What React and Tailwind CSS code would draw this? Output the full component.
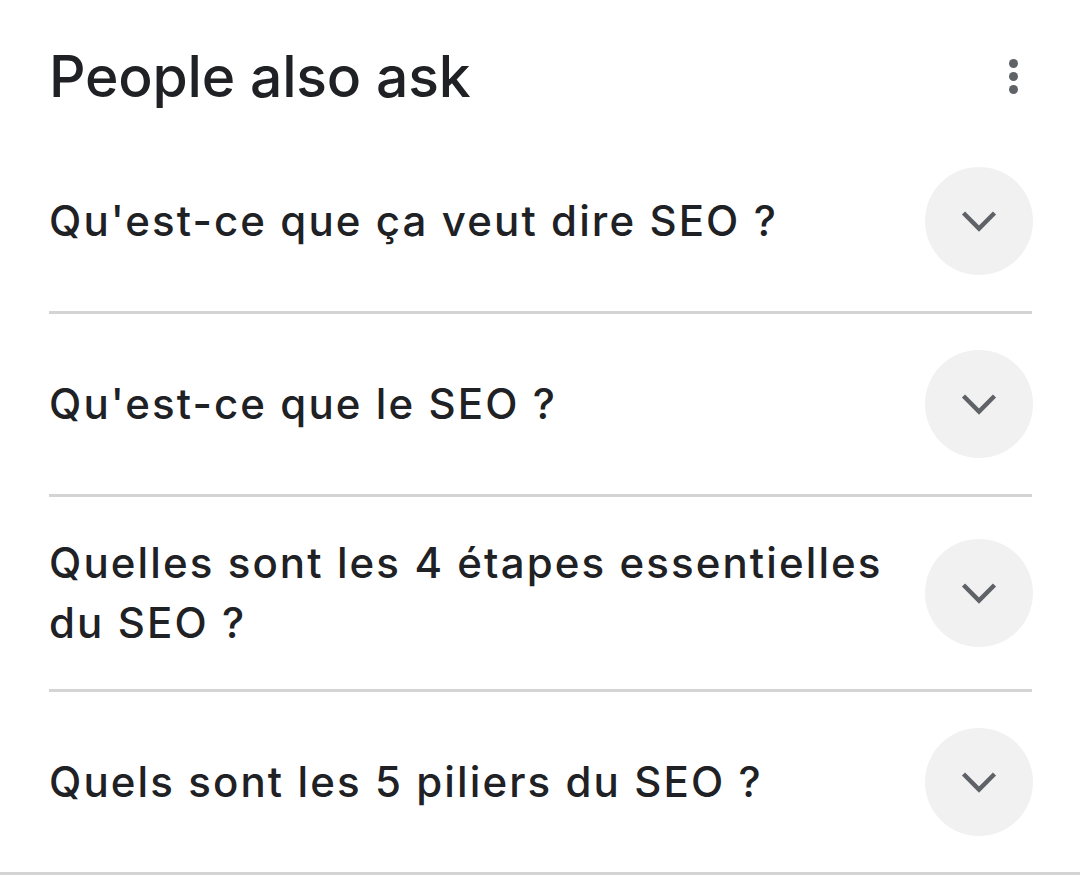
export default function App() {
  const items = [
    "Qu'est-ce que ça veut dire SEO ?",
    "Qu'est-ce que le SEO ?",
    "Quelles sont les 4 étapes essentielles du SEO ?",
    "Quels sont les 5 piliers du SEO ?",
  ];
  return (
    <div className="w-[1080px] h-[890px] bg-white text-[#202124] overflow-hidden" style={{ fontFamily: "Inter, Roboto, sans-serif" }}>
      <div className="pl-[49px] pr-[48px]">
        <div className="h-[131px] flex items-start justify-between pt-[39px]">
          <h2 className="text-[57px] leading-[76px] font-medium tracking-[-0.2px]">People also ask</h2>
          <div className="flex flex-col gap-[4px] items-center mt-[20px] mr-[14px]">
            <span className="w-[9px] h-[9px] rounded-full bg-[#5f6368]" />
            <span className="w-[9px] h-[9px] rounded-full bg-[#5f6368]" />
            <span className="w-[9px] h-[9px] rounded-full bg-[#5f6368]" />
          </div>
        </div>
        {items.map((q, i) => (
          <div key={i} className={"flex items-center justify-between pt-[36px] pb-[36px] " + (i < items.length - 1 ? "border-b-[3px] border-[#d4d4d4]" : "")}>
            <div className="text-[42px] leading-[60px] font-medium tracking-[2.1px] max-w-[850px]">{q}</div>
            <div className="w-[108px] h-[108px] rounded-full bg-[#f1f1f1] flex items-center justify-center shrink-0 -mr-[1px]">
              <svg width="36" height="22" viewBox="0 0 36 22" fill="none">
                <path d="M2.5 3 L18 18.5 L33.5 3" stroke="#5f6368" strokeWidth="4.5" />
              </svg>
            </div>
          </div>
        ))}
      </div>
      <div className="h-[3px] bg-[#d4d4d4]" />
    </div>
  );
}
